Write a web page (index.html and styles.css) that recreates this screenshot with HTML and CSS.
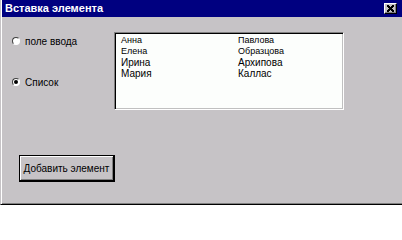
FILE: index.html
```html
<!DOCTYPE html>
<html lang="ru">
<head>
<meta charset="utf-8">
<title>Вставка элемента</title>
<link rel="stylesheet" href="styles.css">
</head>
<body>
<div class="window">
  <div class="titlebar">
    <span class="title">Вставка элемента</span>
    <span class="close"><svg width="11" height="9" viewBox="0 0 11 9"><path d="M2 1.5 L8 7.5 M3 1.5 L9 7.5 M8 1.5 L2 7.5 M9 1.5 L3 7.5" stroke="#000" stroke-width="1" fill="none" shape-rendering="crispEdges"/></svg></span>
  </div>
  <div class="content">
    <div class="top">
      <div class="options">
        <div class="opt opt-first"><span class="radio"></span><span class="label">поле ввода</span></div>
        <div class="opt opt-second"><span class="radio checked"></span><span class="label">Список</span></div>
      </div>
      <div class="listbox">
        <div class="row small"><span>Анна</span><span>Павлова</span></div>
        <div class="row small"><span>Елена</span><span>Образцова</span></div>
        <div class="row"><span>Ирина</span><span>Архипова</span></div>
        <div class="row"><span>Мария</span><span>Каллас</span></div>
      </div>
    </div>
    <div class="btn">Добавить элемент</div>
  </div>
</div>
</body>
</html>
```
FILE: styles.css
```css
html, body {
  margin: 0;
  padding: 0;
  background: #ffffff;
}

body {
  font-family: "Liberation Sans", Arial, sans-serif;
  color: #000;
}

.window {
  width: 402px;
  height: 205px;
  box-sizing: border-box;
  background: #c6c3c6;
  border-left: 1px solid #c6c3c6;
  border-bottom: 1px solid #000;
  box-shadow: inset 1px 0 0 #fff, inset 0 -1px 0 #808080;
}

.titlebar {
  height: 17px;
  margin-left: 1px;
  background: #000080;
  display: flex;
  align-items: center;
  padding: 0 5px 0 3px;
}

.title {
  color: #fff;
  font-weight: bold;
  font-size: 11px;
  line-height: 17px;
}

.close {
  margin-left: auto;
  width: 13px;
  height: 11px;
  box-sizing: border-box;
  background: #c6c3c6;
  border: 1px solid;
  border-color: #fff #000 #000 #fff;
  box-shadow: inset -1px -1px 0 #808080;
  display: flex;
  align-items: center;
  justify-content: center;
}

.close svg {
  display: block;
}

.content {
  padding: 15px 0 0 11px;
}

.top {
  display: flex;
}

.options {
  width: 102px;
  display: flex;
  flex-direction: column;
}

.opt {
  height: 12px;
  display: flex;
  align-items: center;
  font-size: 10px;
  white-space: nowrap;
}

.opt-first {
  margin-top: 3px;
}

.opt-second {
  margin-top: 29px;
}

.radio {
  position: relative;
  flex: none;
  width: 8px;
  height: 8px;
  box-sizing: border-box;
  border-radius: 50%;
  background: #fff;
  border: 1px solid;
  border-color: #404040 #fff #fff #404040;
  margin-right: 5px;
}

.radio.checked::after {
  content: "";
  position: absolute;
  left: 1px;
  top: 1px;
  width: 4px;
  height: 4px;
  border-radius: 50%;
  background: #000;
}

.listbox {
  width: 230px;
  height: 78px;
  box-sizing: border-box;
  background: #fcfefc;
  border: 1px solid;
  border-color: #808080 #fff #fff #808080;
  box-shadow: inset 1px 1px 0 #000, inset -1px -1px 0 #c0c0c0;
  padding: 2px 0 0 6px;
}

.row {
  display: grid;
  grid-template-columns: 117px auto;
  font-size: 10px;
  line-height: 11px;
}

.row.small {
  font-size: 9px;
}

.btn {
  margin: 45px 0 0 7px;
  width: 96px;
  height: 27px;
  box-sizing: border-box;
  border-style: solid;
  border-color: #000;
  border-width: 1px 2px 2px 1px;
  box-shadow: inset 1px 1px 0 #fff, inset -1px -1px 0 #808080;
  display: flex;
  align-items: center;
  justify-content: center;
  font-size: 10px;
  white-space: nowrap;
}
```
